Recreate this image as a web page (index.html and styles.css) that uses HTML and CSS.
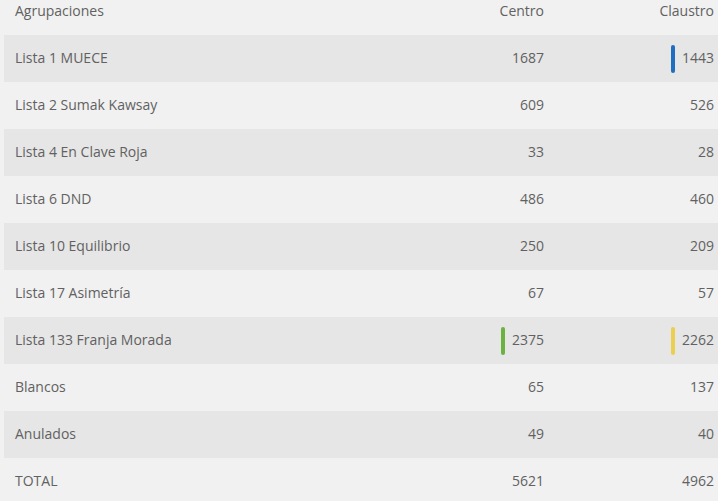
FILE: index.html
```html
<!DOCTYPE html>
<html lang="es">
<head>
<meta charset="utf-8">
<link rel="stylesheet" href="styles.css">
</head>
<body>
<div class="table">
  <div class="row head">
    <div class="name">Agrupaciones</div>
    <div class="num">Centro</div>
    <div class="num last">Claustro</div>
  </div>
  <div class="row odd">
    <div class="name">Lista 1 MUECE</div>
    <div class="num">1687</div>
    <div class="num last"><span class="bar blue"></span>1443</div>
  </div>
  <div class="row">
    <div class="name">Lista 2 Sumak Kawsay</div>
    <div class="num">609</div>
    <div class="num last">526</div>
  </div>
  <div class="row odd">
    <div class="name">Lista 4 En Clave Roja</div>
    <div class="num">33</div>
    <div class="num last">28</div>
  </div>
  <div class="row">
    <div class="name">Lista 6 DND</div>
    <div class="num">486</div>
    <div class="num last">460</div>
  </div>
  <div class="row odd">
    <div class="name">Lista 10 Equilibrio</div>
    <div class="num">250</div>
    <div class="num last">209</div>
  </div>
  <div class="row">
    <div class="name">Lista 17 Asimetría</div>
    <div class="num">67</div>
    <div class="num last">57</div>
  </div>
  <div class="row odd">
    <div class="name">Lista 133 Franja Morada</div>
    <div class="num"><span class="bar green"></span>2375</div>
    <div class="num last"><span class="bar yellow"></span>2262</div>
  </div>
  <div class="row">
    <div class="name">Blancos</div>
    <div class="num">65</div>
    <div class="num last">137</div>
  </div>
  <div class="row odd">
    <div class="name">Anulados</div>
    <div class="num">49</div>
    <div class="num last">40</div>
  </div>
  <div class="row">
    <div class="name">TOTAL</div>
    <div class="num">5621</div>
    <div class="num last">4962</div>
  </div>
</div>
</body>
</html>
```
FILE: styles.css
```css
html, body {
  margin: 0;
  padding: 0;
  background: #f1f1f1;
}
body {
  font-family: "Open Sans", "DejaVu Sans", sans-serif;
  font-size: 14px;
  line-height: 20px;
  color: #616161;
  overflow: hidden;
}
.table {
  padding-left: 4px;
}
.row {
  display: grid;
  grid-template-columns: 1fr 120px 174px;
  align-items: center;
  height: 47px;
  padding-bottom: 2px;
  box-sizing: border-box;
}
.row.head {
  height: 35px;
  align-items: start;
  padding-top: 1px;
  padding-bottom: 0;
}
.row.odd {
  background: #e6e6e6;
}
.name {
  padding-left: 11px;
}
.num {
  text-align: right;
  display: flex;
  justify-content: flex-end;
  align-items: center;
}
.num.last {
  padding-right: 4px;
}
.bar {
  display: inline-block;
  width: 4px;
  height: 28px;
  border-radius: 2px;
  margin-top: 2px;
  margin-right: 7px;
}
.blue { background: #1e6fc0; }
.green { background: #6cb240; }
.yellow { background: #ead04e; }
```
